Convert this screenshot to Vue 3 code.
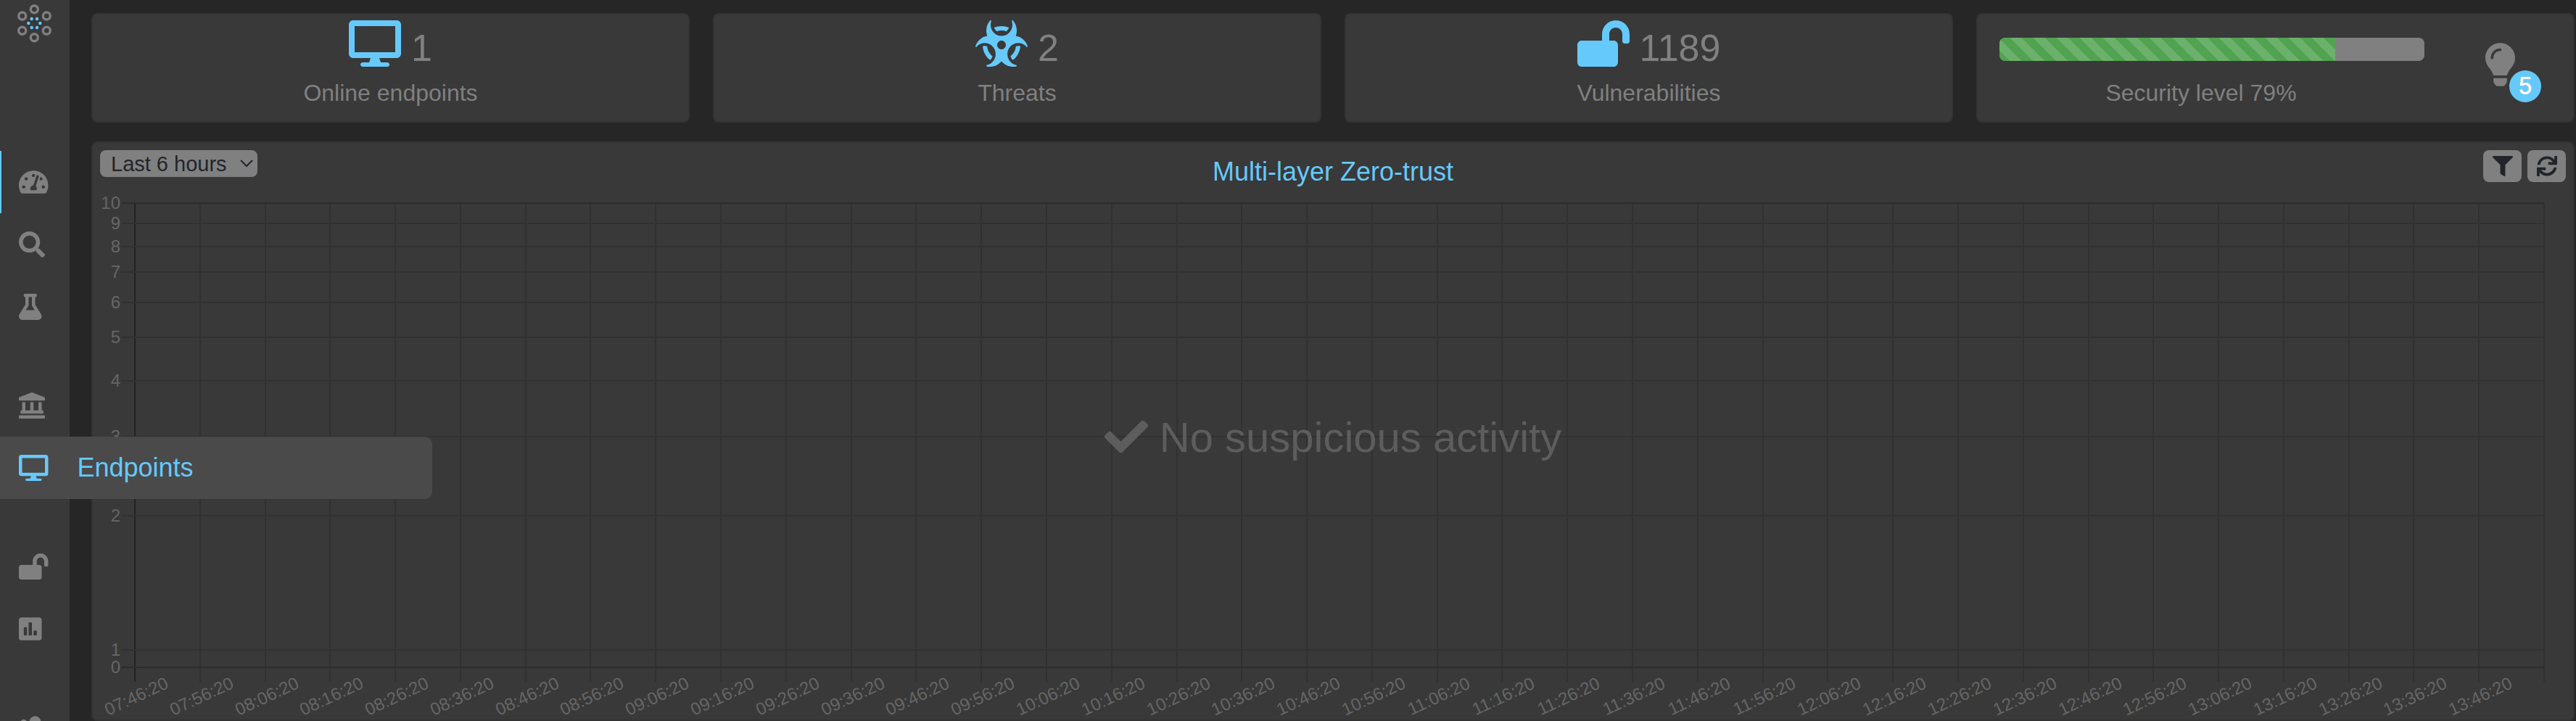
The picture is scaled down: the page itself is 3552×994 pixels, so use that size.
<template>
  <div class="app">
    <nav class="sidebar">
      <a href="#" class="logo" aria-label="Home">
        <svg viewBox="0 0 48 54" width="48" height="54">
          <circle
            v-for="(dot, i) in logoRings"
            :key="'ring' + i"
            :cx="dot[0]"
            :cy="dot[1]"
            r="5"
            fill="none"
            stroke="#808080"
            stroke-width="3.4"
          />
          <circle
            v-for="(dot, i) in logoDots"
            :key="'dot' + i"
            :cx="dot[0]"
            :cy="dot[1]"
            r="2.2"
            fill="#66c9fb"
          />
        </svg>
      </a>

      <ul v-for="(group, g) in menu" :key="g" class="menu-group">
        <li v-for="item in group" :key="item.icon">
          <a
            href="#"
            class="menu-item"
            :class="{ active: item.active, open: item.open }"
            :aria-label="item.name"
          >
            <svg class="menu-icon" :viewBox="'0 0 ' + icons[item.icon].w + ' 512'">
              <path :d="icons[item.icon].d" />
            </svg>
            <span v-if="item.open" class="menu-label">{{ item.name }}</span>
          </a>
        </li>
      </ul>
    </nav>

    <main class="content">
      <section class="summary">
        <div v-for="stat in stats" :key="stat.label" class="card stat">
          <div class="stat-value">
            <svg class="stat-icon" viewBox="0 0 576 512">
              <path :d="icons[stat.icon].d" />
            </svg>
            <span>{{ stat.value }}</span>
          </div>
          <div class="stat-label">{{ stat.label }}</div>
        </div>

        <div class="card security">
          <div class="security-level">
            <div class="progress">
              <div class="progress-bar" :style="{ width: securityLevel + '%' }"></div>
            </div>
            <div class="stat-label">Security level {{ securityLevel }}%</div>
          </div>
          <button type="button" class="hints" aria-label="Recommendations">
            <svg viewBox="0 0 352 512">
              <path :d="icons.bulb.d" />
            </svg>
            <span class="badge">5</span>
          </button>
        </div>
      </section>

      <section class="card activity">
        <header class="activity-header">
          <div class="period">
            <select v-model="period" aria-label="Period">
              <option>Last 6 hours</option>
              <option>Last 24 hours</option>
              <option>Last 7 days</option>
            </select>
            <svg class="chevron" viewBox="0 0 18 12">
              <path d="M1 2l8 8 8-8" />
            </svg>
          </div>
          <h2>Multi-layer Zero-trust</h2>
          <div class="tools">
            <button type="button" aria-label="Filter">
              <svg viewBox="0 0 512 512"><path :d="icons.filter.d" /></svg>
            </button>
            <button type="button" aria-label="Refresh">
              <svg viewBox="0 0 512 512"><path :d="icons.sync.d" /></svg>
            </button>
          </div>
        </header>

        <div ref="chartEl" class="chart">
          <svg class="plot" :width="chartWidth" height="732">
            <line
              v-for="(x, i) in columns"
              :key="'c' + i"
              :x1="x"
              :x2="x"
              y1="20"
              y2="680"
              :class="i === 0 ? 'axis' : 'grid'"
            />
            <g v-for="row in rows" :key="'r' + row.value">
              <line
                x1="39"
                :x2="chartWidth - 40"
                :y1="row.y"
                :y2="row.y"
                :class="row.value % 10 === 0 ? 'edge' : 'grid'"
              />
              <text x="38" :y="row.y + 8" text-anchor="end">{{ row.value }}</text>
            </g>
            <text
              v-for="(time, i) in times"
              :key="time"
              :transform="'translate(' + (columns[i] + 2) + ' 700) rotate(-25)'"
              y="8"
              text-anchor="middle"
            >{{ time }}</text>
          </svg>
          <div class="empty">
            <svg viewBox="0 0 512 512"><path :d="icons.check.d" /></svg>
            <span>No suspicious activity</span>
          </div>
        </div>
      </section>
    </main>
  </div>
</template>

<script setup>
import { ref, computed, onMounted, onUnmounted } from 'vue'

const icons = {
  gauge: {
    w: 576,
    d: 'M288 32C128.94 32 0 160.94 0 320c0 52.8 14.25 102.26 39.06 144.8 5.61 9.62 16.3 15.2 27.44 15.2h443c11.14 0 21.83-5.58 27.44-15.2C561.75 422.26 576 372.8 576 320c0-159.06-128.94-288-288-288zm0 64c14.71 0 26.58 10.13 30.32 23.65-1.11 2.26-2.64 4.23-3.45 6.67l-9.22 27.67c-5.13 3.49-10.97 6.01-17.64 6.01-17.67 0-32-14.33-32-32S270.33 96 288 96zM96 384c-17.67 0-32-14.33-32-32s14.33-32 32-32 32 14.33 32 32-14.33 32-32 32zm48-160c-17.67 0-32-14.33-32-32s14.33-32 32-32 32 14.33 32 32-14.33 32-32 32zm246.77-72.41l-61.33 184C343.13 347.33 352 364.54 352 384c0 11.72-3.38 22.55-8.88 32H232.88c-5.5-9.45-8.88-20.28-8.88-32 0-33.94 26.5-61.43 59.9-63.59l61.34-184.01c4.17-12.56 17.73-19.45 30.36-15.17 12.57 4.19 19.35 17.79 15.17 30.36zm14.66 57.2l15.52-46.55c3.47-1.29 7.13-2.23 11.05-2.23 17.67 0 32 14.33 32 32s-14.33 32-32 32c-11.38-.01-20.89-6.28-26.57-15.22zM480 384c-17.67 0-32-14.33-32-32s14.33-32 32-32 32 14.33 32 32-14.33 32-32 32z',
  },
  search: {
    w: 512,
    d: 'M505 442.7L405.3 343c-4.5-4.5-10.6-7-17-7H372c27.6-35.3 44-79.7 44-128C416 93.1 322.9 0 208 0S0 93.1 0 208s93.1 208 208 208c48.3 0 92.7-16.4 128-44v16.3c0 6.4 2.5 12.5 7 17l99.7 99.7c9.4 9.4 24.6 9.4 33.9 0l28.3-28.3c9.4-9.4 9.4-24.6.1-34zM208 336c-70.7 0-128-57.2-128-128 0-70.7 57.2-128 128-128 70.7 0 128 57.2 128 128 0 70.7-57.2 128-128 128z',
  },
  flask: {
    w: 448,
    d: 'M437.2 403.5L320 215V64h8c13.3 0 24-10.7 24-24V24c0-13.3-10.7-24-24-24H120c-13.3 0-24 10.7-24 24v16c0 13.3 10.7 24 24 24h8v151L10.8 403.5C-18.5 450.6 15.3 512 70.9 512h306.2c55.7 0 89.4-61.5 60.1-108.5zM137.9 320l48.2-77.6c3.7-5.2 5.8-11.6 5.8-18.4V64h64v160c0 6.9 2.2 13.2 5.8 18.4l48.2 77.6h-172z',
  },
  landmark: {
    w: 512,
    d: 'M501.62 92.11L267.24 2.04a31.958 31.958 0 0 0-22.47 0L10.38 92.11A16.001 16.001 0 0 0 0 107.09V144c0 8.84 7.16 16 16 16h480c8.84 0 16-7.16 16-16v-36.91c0-6.67-4.14-12.64-10.38-14.98zM64 192v160H48c-8.84 0-16 7.16-16 16v48h448v-48c0-8.84-7.16-16-16-16h-16V192h-64v160h-96V192h-64v160h-96V192H64zm432 256H16c-8.84 0-16 7.16-16 16v32c0 8.84 7.16 16 16 16h480c8.84 0 16-7.16 16-16v-32c0-8.84-7.16-16-16-16z',
  },
  desktop: {
    w: 576,
    d: 'M528 0H48C21.5 0 0 21.5 0 48v320c0 26.5 21.5 48 48 48h192l-16 48h-72c-13.3 0-24 10.7-24 24s10.7 24 24 24h272c13.3 0 24-10.7 24-24s-10.7-24-24-24h-72l-16-48h192c26.5 0 48-21.5 48-48V48c0-26.5-21.5-48-48-48zm-16 352H64V64h448v288z',
  },
  unlock: {
    w: 576,
    d: 'M423.5 0C339.5.3 272 69.5 272 153.5V224H48c-26.5 0-48 21.5-48 48v192c0 26.5 21.5 48 48 48h352c26.5 0 48-21.5 48-48V272c0-26.5-21.5-48-48-48h-48v-71.1c0-39.6 31.7-72.5 71.3-72.9 40-.4 72.7 32.1 72.7 72v80c0 13.3 10.7 24 24 24h32c13.3 0 24-10.7 24-24v-80C576 68 507.5-.3 423.5 0z',
  },
  poll: {
    w: 448,
    d: 'M400 32H48C21.5 32 0 53.5 0 80v352c0 26.5 21.5 48 48 48h352c26.5 0 48-21.5 48-48V80c0-26.5-21.5-48-48-48zM160 368c0 8.84-7.16 16-16 16h-32c-8.84 0-16-7.16-16-16V240c0-8.84 7.16-16 16-16h32c8.84 0 16 7.16 16 16v128zm96 0c0 8.84-7.16 16-16 16h-32c-8.84 0-16-7.16-16-16V144c0-8.84 7.16-16 16-16h32c8.84 0 16 7.16 16 16v224zm96 0c0 8.84-7.16 16-16 16h-32c-8.84 0-16-7.16-16-16v-64c0-8.84 7.16-16 16-16h32c8.84 0 16 7.16 16 16v64z',
  },
  users: {
    w: 640,
    d: 'M96 224c35.3 0 64-28.7 64-64s-28.7-64-64-64-64 28.7-64 64 28.7 64 64 64zm224 32c61.9 0 112-50.1 112-112S381.9 32 320 32 208 82.1 208 144s50.1 112 112 112zM64 256c-35.3 0-64 28.7-64 64v32c0 17.7 14.3 32 32 32h66c6-44 33-82 70-110-11-11-27-18-44-18zm176 32c-64 0-112 50-112 115v29c0 26.5 21.5 48 48 48h288c26.5 0 48-21.5 48-48v-29c0-65-48-115-112-115z',
  },
  biohazard: {
    w: 576,
    d: 'M287.9 112c18.6 0 36.2 3.8 52.8 9.6 13.3-10.3 23.6-24.3 29.5-40.7-25.2-10.9-53-17-82.2-17-29.1 0-56.9 6-82.1 16.9 5.9 16.4 16.2 30.4 29.5 40.7 16.5-5.7 34-9.5 52.5-9.5zM163.6 438.7c12-11.8 20.4-26.4 24.5-42.4-32.9-26.4-54.8-65.3-58.9-109.6-8.5-2.8-17.2-4.6-26.4-4.6-7.6 0-15.2 1-22.5 3.1 4.1 62.8 35.8 118 83.3 153.5zm224.2-42.6c4.1 16 12.5 30.7 24.5 42.5 47.4-35.5 79.1-90.7 83-153.5-7.2-2-14.7-3-22.2-3-9.2 0-18 1.9-26.6 4.7-4.1 44.2-26 82.9-58.7 109.3zm113.5-205c-17.6-10.4-36.3-16.6-55.3-19.9 6-17.7 10-36.4 10-56.2 0-41-14.5-80.8-41-112.2-2.5-3-6.6-3.7-10-1.8-3.3 1.9-4.8 6-3.6 9.7 4.5 13.8 6.6 26.3 6.6 38.5 0 67.8-53.8 122.9-120 122.9S168 117 168 49.2c0-12.1 2.2-24.7 6.6-38.5 1.2-3.7-.3-7.8-3.6-9.7-3.4-1.9-7.5-1.2-10 1.8C134.6 34.2 120 74 120 115c0 19.8 3.9 38.5 10 56.2-18.9 3.3-37.7 9.5-55.3 19.9-34.6 20.5-61 53.3-74.3 92.4-1.3 3.7.2 7.7 3.5 9.8 3.3 2 7.5 1.3 10-1.6 9.4-10.8 19-19.1 29.2-25.1 57.3-33.9 130.8-13.7 163.9 45 33.1 58.7 13.4 134-43.9 167.9-10.2 6.1-22 10.4-35.8 13.4-3.7.8-6.4 4.2-6.4 8.1.1 4 2.7 7.3 6.5 8 39.7 7.8 80.6.8 115.2-19.7 18-10.6 32.9-24.5 45.3-40.1 12.4 15.6 27.3 29.5 45.3 40.1 34.6 20.5 75.5 27.5 115.2 19.7 3.8-.7 6.4-4 6.5-8 0-3.9-2.6-7.3-6.4-8.1-13.9-2.9-25.6-7.3-35.8-13.4-57.3-33.9-77-109.2-43.9-167.9s106.6-78.9 163.9-45c10.2 6.1 19.8 14.3 29.2 25.1 2.5 2.9 6.7 3.6 10 1.6s4.8-6.1 3.5-9.8c-13.1-39.1-39.5-72-74.1-92.4zm-213.4 129c-26.5 0-48-21.5-48-48s21.5-48 48-48 48 21.5 48 48-21.5 48-48 48z',
  },
  bulb: {
    w: 352,
    d: 'M96.06 454.35c.01 6.29 1.87 12.45 5.36 17.69l17.09 25.69a31.99 31.99 0 0 0 26.64 14.28h61.71a31.99 31.99 0 0 0 26.64-14.28l17.09-25.69a31.989 31.989 0 0 0 5.36-17.69l.04-38.35H96.01l.05 38.35zM0 176c0 44.37 16.45 84.85 43.56 115.78 16.52 18.85 42.36 58.23 52.21 91.45.04.26.07.52.11.78h160.24c.04-.26.07-.51.11-.78 9.85-33.22 35.69-72.6 52.21-91.45C335.55 260.85 352 220.37 352 176 352 78.61 272.91-.3 175.45 0 73.44.31 0 82.97 0 176zm176-80c-44.11 0-80 35.89-80 80 0 8.84-7.16 16-16 16s-16-7.16-16-16c0-61.76 50.24-112 112-112 8.84 0 16 7.16 16 16s-7.16 16-16 16z',
  },
  filter: {
    w: 512,
    d: 'M487.976 0H24.028C2.71 0-8.047 25.866 7.058 40.971L192 225.941V432c0 7.831 3.821 15.17 10.237 19.662l80 55.98C298.02 518.69 320 507.493 320 487.98V225.941l184.947-184.97C520.021 25.896 509.338 0 487.976 0z',
  },
  sync: {
    w: 512,
    d: 'M440.65 12.57l4 82.77A247.16 247.16 0 0 0 255.83 8C134.73 8 33.91 94.92 12.29 209.82A12 12 0 0 0 24.09 224h49.05a12 12 0 0 0 11.67-9.26 175.91 175.91 0 0 1 317-56.94l-101.46-4.86a12 12 0 0 0-12.57 12v47.41a12 12 0 0 0 12 12H500a12 12 0 0 0 12-12V12a12 12 0 0 0-12-12h-47.37a12 12 0 0 0-11.98 12.57zM255.83 432a175.61 175.61 0 0 1-146-77.8l101.8 4.87a12 12 0 0 0 12.57-12v-47.4a12 12 0 0 0-12-12H12a12 12 0 0 0-12 12V500a12 12 0 0 0 12 12h47.35a12 12 0 0 0 12-12.6l-4.15-82.57A247.17 247.17 0 0 0 255.83 504c121.11 0 221.93-86.92 243.55-201.82a12 12 0 0 0-11.8-14.18h-49.05a12 12 0 0 0-11.67 9.26A175.86 175.86 0 0 1 255.83 432z',
  },
  check: {
    w: 512,
    d: 'M173.898 439.404l-166.4-166.4c-9.997-9.997-9.997-26.206 0-36.204l36.203-36.204c9.997-9.998 26.207-9.998 36.204 0L192 312.69 432.095 72.596c9.997-9.997 26.207-9.997 36.204 0l36.203 36.204c9.997 9.997 9.997 26.206 0 36.204l-294.4 294.401c-9.998 9.997-26.207 9.997-36.204-.001z',
  },
}

const logoRings = [
  [24.3, 6.7],
  [41.3, 16],
  [41.3, 36.3],
  [24.3, 45.7],
  [7.7, 36.3],
  [7.7, 16],
]

const logoDots = [
  [20.7, 20],
  [28, 20],
  [16.3, 26],
  [32.3, 26],
  [20.7, 32],
  [28, 32],
]

const menu = [
  [
    { icon: 'gauge', name: 'Dashboard', active: true },
    { icon: 'search', name: 'Search' },
    { icon: 'flask', name: 'Lab' },
  ],
  [
    { icon: 'landmark', name: 'Organization' },
    { icon: 'desktop', name: 'Endpoints', open: true },
  ],
  [
    { icon: 'unlock', name: 'Vulnerabilities' },
    { icon: 'poll', name: 'Reports' },
  ],
  [{ icon: 'users', name: 'Users' }],
]

const stats = [
  { icon: 'desktop', value: 1, label: 'Online endpoints' },
  { icon: 'biohazard', value: 2, label: 'Threats' },
  { icon: 'unlock', value: 1189, label: 'Vulnerabilities' },
]

const securityLevel = ref(79)
const period = ref('Last 6 hours')

const chartEl = ref(null)
const chartWidth = ref(1200)
let observer = null

// one label every 10 minutes, 07:46:20 - 13:46:20
const times = Array.from({ length: 37 }, (_, i) => {
  const minutes = 7 * 60 + 46 + i * 10
  const h = String(Math.floor(minutes / 60)).padStart(2, '0')
  const m = String(minutes % 60).padStart(2, '0')
  return `${h}:${m}:20`
})

const columns = computed(() => {
  const step = (chartWidth.value - 98) / times.length
  return Array.from({ length: times.length + 1 }, (_, i) => Math.round(58 + i * step))
})

// log scale, zero sits just under 1
const rows = [10, 9, 8, 7, 6, 5, 4, 3, 2, 1, 0].map((value) => ({
  value,
  y: value === 0 ? 660 : Math.round(636 - 616 * Math.log10(value)),
}))

onMounted(() => {
  chartWidth.value = chartEl.value.clientWidth
  observer = new ResizeObserver(() => {
    chartWidth.value = chartEl.value.clientWidth
  })
  observer.observe(chartEl.value)
})

onUnmounted(() => {
  observer.disconnect()
})
</script>

<style>
body {
  background: #262626;
}
</style>

<style scoped>
* {
  box-sizing: border-box;
}

.app {
  display: flex;
  height: 100vh;
  overflow: hidden;
  background: #262626;
  color: #808080;
  font-family: "Liberation Sans", Arial, sans-serif;
  font-size: 32px;
}

.sidebar {
  position: relative;
  z-index: 2;
  flex: none;
  width: 96px;
  height: 100%;
  background: #393939;
}

.logo {
  display: block;
  height: 208px;
  padding: 6px 0 0 23px;
}

.logo svg {
  display: block;
}

.menu-group {
  margin: 0 0 50px;
  padding: 0;
  list-style: none;
}

.menu-item {
  display: flex;
  align-items: center;
  gap: 36px;
  height: 86px;
  padding-left: 26px;
  color: #808080;
  font-size: 36px;
  text-decoration: none;
}

.menu-item.active {
  box-shadow: inset 2px 0 #66c9fb;
}

.menu-item.open {
  width: 596px;
  border-radius: 0 10px 10px 0;
  background: #4a4a4a;
  color: #66c9fb;
}

.menu-icon {
  flex: none;
  height: 36px;
  fill: currentColor;
}

.menu-label {
  padding-left: 4px;
}

.content {
  flex: 1;
  display: flex;
  flex-direction: column;
  gap: 26px;
  min-width: 0;
  padding: 18px 2px 0 30px;
}

.card {
  border: 2px solid #333;
  border-radius: 8px;
  background: #393939;
}

.summary {
  display: grid;
  grid-template-columns: 59fr 60fr 60fr 59fr;
  gap: 32px;
}

.stat {
  height: 151px;
  padding-top: 8px;
}

.stat-value {
  display: flex;
  justify-content: center;
  gap: 14px;
  height: 76px;
  font-size: 52px;
  line-height: 76px;
}

.stat-icon {
  width: 72px;
  height: 64px;
  fill: #66c9fb;
}

.stat-label {
  line-height: 48px;
  text-align: center;
}

.security {
  display: flex;
  align-items: flex-start;
}

.security-level {
  flex: 1;
  padding-top: 32px;
}

.progress {
  height: 32px;
  margin: 0 0 20px 30px;
  overflow: hidden;
  border-radius: 8px;
  background: #808080;
}

.progress-bar {
  height: 100%;
  background-color: #51a351;
  background-image: linear-gradient(
    45deg,
    rgba(255, 255, 255, 0.15) 25%,
    transparent 25%,
    transparent 50%,
    rgba(255, 255, 255, 0.15) 50%,
    rgba(255, 255, 255, 0.15) 75%,
    transparent 75%
  );
  background-position: 14px 0;
  background-size: 32px 32px;
}

.hints {
  position: relative;
  margin: 39px 38px 0 76px;
  padding: 0 42px 0 8px;
  border: none;
  background: none;
  color: #fff;
  font-size: 32px;
  cursor: pointer;
}

.hints svg {
  display: block;
  width: 41px;
  height: 60px;
  fill: #808080;
}

.badge {
  position: absolute;
  right: 6px;
  bottom: -22px;
  width: 44px;
  height: 44px;
  border-radius: 50%;
  background: #66c9fb;
  font-family: Inter, sans-serif;
  font-weight: 500;
  line-height: 44px;
}

.activity {
  flex: 1;
}

.activity-header {
  display: grid;
  grid-template-columns: 1fr auto 1fr;
  align-items: start;
  height: 63px;
  padding: 10px 10px 0;
}

.activity-header h2 {
  margin: 0;
  padding-top: 8px;
  color: #66c9fb;
  font-size: 36px;
  font-weight: 400;
  line-height: 44px;
}

.period {
  position: relative;
  justify-self: start;
}

.period select {
  display: block;
  width: 217px;
  height: 37px;
  padding: 0 15px;
  border: none;
  border-radius: 8px;
  background: #808080;
  color: #212529;
  font-family: inherit;
  font-size: 29px;
  appearance: none;
}

.chevron {
  position: absolute;
  top: 12px;
  right: 6px;
  width: 18px;
  height: 12px;
  fill: none;
  stroke: #212529;
  stroke-width: 2;
  pointer-events: none;
}

.tools {
  display: flex;
  justify-content: flex-end;
  gap: 8px;
}

.tools button {
  display: flex;
  align-items: center;
  justify-content: center;
  width: 53px;
  height: 44px;
  padding: 0;
  border: none;
  border-radius: 8px;
  background: #808080;
  cursor: pointer;
}

.tools svg {
  width: 28px;
  height: 28px;
  fill: #212529;
}

.chart {
  position: relative;
}

.plot {
  display: block;
  overflow: visible;
}

.plot text {
  fill: #666;
  font-size: 24px;
}

.plot line {
  stroke-width: 2;
}

.grid {
  stroke: #313131;
}

.edge {
  stroke: #2c2c2c;
}

.axis {
  stroke: #222;
}

.empty {
  position: absolute;
  inset: 0 0 48px;
  display: flex;
  align-items: center;
  justify-content: center;
  gap: 16px;
  color: #5d5d5d;
  font-size: 58px;
}

.empty svg {
  width: 60px;
  height: 60px;
  fill: currentColor;
}
</style>
